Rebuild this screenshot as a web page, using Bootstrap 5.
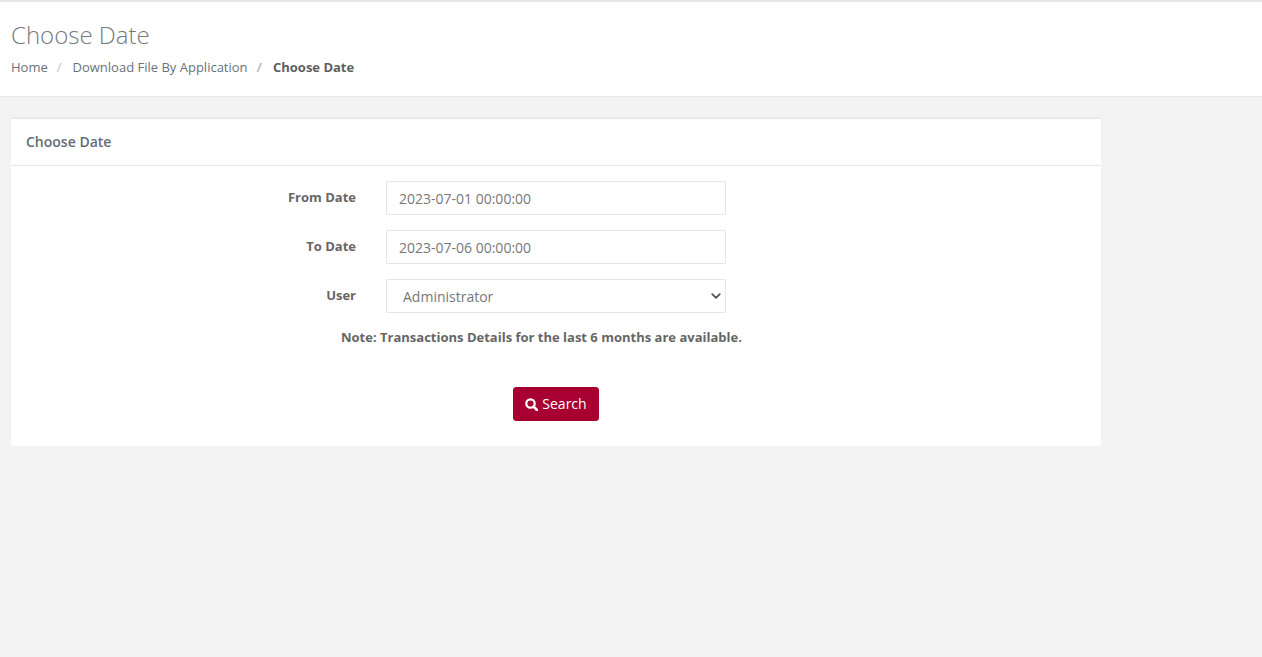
<!DOCTYPE html>
<html lang="en">
<head>
<meta charset="utf-8">
<title>Choose Date</title>
<link href="https://cdn.jsdelivr.net/npm/bootstrap@5.3.0/dist/css/bootstrap.min.css" rel="stylesheet">
<style>
html,body{height:100%}
body{background:#f3f3f3;font-family:"Open Sans",sans-serif;color:#666;font-size:13px}
.top-head{background:#fff;border-top:2px solid #e7e7e7;border-bottom:1px solid #e7e7e7;height:97px;padding:18px 11px 0}
.top-head h1{font-size:24px;font-weight:300;line-height:30px;margin:0 0 8px;color:#767a7c}
.crumbs{font-size:13px;line-height:18px;margin:0;padding:0}
.crumbs .breadcrumb-item a{color:#687278;text-decoration:none}
.crumbs .breadcrumb-item+.breadcrumb-item{padding-left:9px}
.crumbs .breadcrumb-item+.breadcrumb-item::before{color:#c0c0c0;padding-right:11px;content:"/";padding-left:0}
.crumbs .breadcrumb-item.active{color:#5f5f5f;font-weight:700}
.page-wrap{padding:20px 0 0 11px}
.date-panel{width:1090px;height:329px;background:#fff;border:0;border-top:2px solid #e7eaec;border-radius:0}
.date-panel .card-header{background:#fff;border-bottom:1px solid #e7eaec;border-radius:0;height:47px;padding:0 15px 2px;display:flex;align-items:center;font-size:14px;font-weight:600;color:#636d75}
.date-panel .card-body{padding:15px 0 0}
.field-row{margin-bottom:15px;height:34px}
.field-label{width:345px;text-align:right;font-weight:700;font-size:13px;line-height:18px;padding-top:7px;margin:0;color:#666}
.field-box{width:340px;margin-left:30px}
.field-box .form-control,.field-box .form-select{height:34px;border:1px solid #e5e6e7;border-radius:1px;font-size:14px;color:#777;line-height:20px;background-color:#fff}
.field-box .form-control{padding:6px 12px}
.field-box .form-select{padding:7px 12px 5px 16px;background-image:url("data:image/svg+xml,%3csvg xmlns='http://www.w3.org/2000/svg' viewBox='0 0 16 16'%3e%3cpath fill='none' stroke='%23555' stroke-linecap='round' stroke-linejoin='round' stroke-width='3' d='m2 5 6 6 6-6'/%3e%3c/svg%3e");background-size:12px 10px;background-position:right 3px center}
.note-line{margin:0 0 0 330px;width:400px;line-height:18px;font-weight:700;font-size:13px;white-space:nowrap;color:#666}
.btn-row{margin:41px 0 0 502px}
.btn-crimson{background:#a80030;border-color:#a80030;color:#fff;font-size:14px;height:34px;width:86px;padding:0 0 2px;border-radius:3px;display:flex;align-items:center;justify-content:center;gap:4px}
.btn-crimson:hover{background:#a80030;color:#fff;border-color:#a80030}
.btn-crimson svg{margin-top:2px}
</style>
</head>
<body>
<div class="top-head">
  <h1>Choose Date</h1>
  <nav aria-label="breadcrumb">
    <ol class="breadcrumb crumbs">
      <li class="breadcrumb-item"><a href="#">Home</a></li>
      <li class="breadcrumb-item"><a href="#">Download File By Application</a></li>
      <li class="breadcrumb-item active" aria-current="page">Choose Date</li>
    </ol>
  </nav>
</div>
<div class="page-wrap">
  <div class="card date-panel">
    <div class="card-header">Choose Date</div>
    <div class="card-body">
      <form>
        <div class="d-flex field-row">
          <label class="field-label" for="fromDate">From Date</label>
          <div class="field-box"><input id="fromDate" class="form-control" type="text" value="2023-07-01 00:00:00"></div>
        </div>
        <div class="d-flex field-row">
          <label class="field-label" for="toDate">To Date</label>
          <div class="field-box"><input id="toDate" class="form-control" type="text" value="2023-07-06 00:00:00"></div>
        </div>
        <div class="d-flex field-row">
          <label class="field-label" for="userSel">User</label>
          <div class="field-box"><select id="userSel" class="form-select"><option>Administrator</option></select></div>
        </div>
        <p class="note-line">Note: Transactions Details for the last 6 months are available.</p>
        <div class="btn-row">
          <button type="button" class="btn btn-crimson">
            <svg width="13" height="13" viewBox="0 0 13 13" aria-hidden="true"><circle cx="5.5" cy="5.5" r="4.2" fill="none" stroke="#fff" stroke-width="2.2"/><path d="M8.6 8.6 12 12" stroke="#fff" stroke-width="2.6" stroke-linecap="round"/></svg>
            <span>Search</span>
          </button>
        </div>
      </form>
    </div>
  </div>
</div>
<script src="https://cdn.jsdelivr.net/npm/bootstrap@5.3.0/dist/js/bootstrap.bundle.min.js"></script>
</body>
</html>
